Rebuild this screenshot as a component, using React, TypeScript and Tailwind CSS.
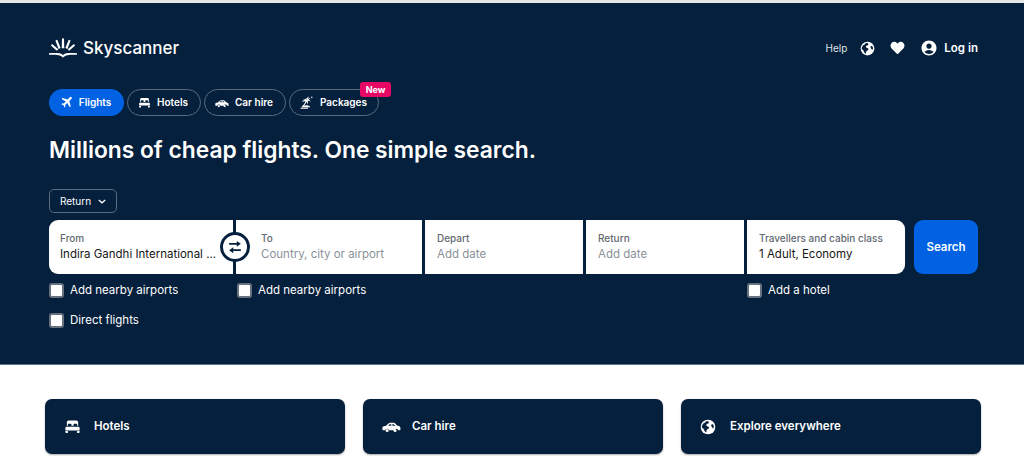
import { FaHeart } from "react-icons/fa";
import { MdAccountCircle } from "react-icons/md";

const FONT = "font-['Inter','Noto_Sans',sans-serif]";

function PlaneIcon({ className }: { className?: string }) {
  return (
    <svg viewBox="0 0 24 24" fill="currentColor" className={className}>
      <path d="M21.6 2.400c-1-1-2.600-.9-3.600.1l-3.700 3.800L4.600 3.600 2.800 5.400l7.900 4.800-3.600 3.700-3-.5-1.600 1.600 4 2.100 2 4 1.600-1.600-.5-3 3.700-3.600 4.800 7.900 1.800-1.800-2.700-9.700 3.800-3.700c1-1 1.100-2.600.1-3.600z" />
    </svg>
  );
}

function BedIcon({ className }: { className?: string }) {
  return (
    <svg viewBox="0 0 24 24" fill="currentColor" className={className}>
      <path d="M6.500 3.500h11A2.500 2.500 0 0 1 20 6v5h-1.500V9.300c0-.7-.6-1.300-1.300-1.300h-2.400c-.7 0-1.300.6-1.300 1.300V11h-3V9.300C10.500 8.600 9.900 8 9.200 8H6.800c-.7 0-1.300.6-1.300 1.300V11H4V6a2.500 2.500 0 0 1 2.500-2.500z" />
      <path d="M3.500 12.500h17c.8 0 1.500.7 1.500 1.500v3.500H2V14c0-.8.700-1.500 1.500-1.500zM2 18.500h3.500V21H3a1 1 0 0 1-1-1v-1.500zM18.500 18.500H22V20a1 1 0 0 1-1 1h-2.500v-2.500z" />
    </svg>
  );
}

function CarIcon({ className }: { className?: string }) {
  return (
    <svg viewBox="0 0 24 24" fill="currentColor" className={className}>
      <path fillRule="evenodd" d="M0.500 13.500c0-1.100.9-1.700 2-1.900l2.600-.5 2.700-2.600c.8-.8 1.800-1.200 2.900-1.200h3.300c1.400 0 2.700.6 3.600 1.700l1.400 1.800 2.300.7c1.200.4 2 1.400 2 2.600v1.700c0 .6-.4 1-1 1h-1.600a2.800 2.800 0 0 0-5.400 0H9.200a2.800 2.800 0 0 0-5.400 0H1.500c-.6 0-1-.4-1-1v-2.300zM7.800 10.900l1.300-1.300c.4-.4.900-.6 1.500-.6h1.100v1.900H7.800zm5.200 0V9h.9c.9 0 1.700.4 2.300 1.100l.7.800H13z" />
      <circle cx="6.500" cy="17.200" r="1.900" />
      <circle cx="16.500" cy="17.200" r="1.900" />
    </svg>
  );
}

function PalmIcon({ className }: { className?: string }) {
  return (
    <svg viewBox="0 0 24 24" fill="currentColor" className={className}>
      <path d="M13 8.500c-1.500-2-4.500-2.700-7-1.500 1.500-.3 3.300.2 4.500 1.200C8.300 7.800 5.800 8.800 5 11c1.500-1 3.600-1.400 5.300-.8-1.200 3-3.200 5.900-6 8.300l1.600.8c2.800-2.500 4.800-5.500 6.200-8.600.8 1.100 1.200 2.800.8 4.400 1.600-1.500 1.900-3.900 1-5.800 1.800-.1 3.700.6 4.800 1.900-.3-2-1.700-3.500-3.600-4 1.100-1 2.700-1.400 4.200-1.100-1.400-1.200-3.400-1-4.800 0 0-1.500.7-2.900 1.800-3.700-2 .4-3.300 2-3.500 3.900-.5-1-1.400-1.800-2.500-2.100.6.600 1 1.500 1.100 2.300z" />
      <path d="M11 16.500c2.800 0 5.500 1 7.500 3H4c1.800-1.900 4.300-3 7-3zM2.500 20.500h12V22h-12z" />
      <circle cx="20.500" cy="3.500" r="1.200" />
    </svg>
  );
}

function GlobeIcon({ className }: { className?: string }) {
  return (
    <svg viewBox="0 0 24 24" className={className}>
      <circle cx="12" cy="12" r="11" fill="#ffffff" />
      <path
        fill="#05203c"
        d="M9 3.500c-.8 1.800-2.400 2.700-4 3.200-1.600 1.900-2.500 4.200-2.300 6.400 1.700.3 2.800 1.500 3.300 3.100.5 1.600 1.600 3.200 3.400 4.200.4-1.700.1-3 .9-4.200.9-1.200 2.700-1.200 3.200-2.700.4-1.200-.7-2-2-2.400-1.500-.5-2.600-1.500-1.800-2.900.8-1.300 2.300-1 3.200-2 .6-.8.4-1.900-.2-2.800-1.300-.3-2.500-.2-3.700.1z"
      />
      <path fill="#05203c" d="M17 8.500c1.200-.8 2.500-.5 3.400.5.500 2 .3 3.800-.4 5.300-1.100-.5-2-1.300-2.500-2.600-.4-1.200-.9-2.400-.5-3.200z" />
    </svg>
  );
}

function SwapIcon({ className }: { className?: string }) {
  return (
    <svg viewBox="0 0 24 24" fill="currentColor" className={className}>
      <path d="M2 6.500h13V3l7 5-7 5V9.500H2z" transform="translate(0 -1.500)" />
      <path d="M22 17.500H9V21l-7-5 7-5v3.500h13z" transform="translate(0 1.500)" />
    </svg>
  );
}

function Logo() {
  return (
    <div className="flex items-center gap-[6px]">
      <svg viewBox="0 0 28 20" fill="#ffffff" className="w-[28px] h-[20px]">
        <path d="M14 19.800c-1-1.500-2.400-2.200-4.500-2.600-3-.5-6-.5-9.500-.4v-1.600c4-.3 8-.4 10.500.1 1.600.3 2.800.9 3.500 1.900.7-1 1.900-1.600 3.500-1.900 2.500-.5 6.500-.4 10.500-.1v1.600c-3.500-.1-6.500-.1-9.500.4-2.100.4-3.500 1.100-4.500 2.600z" />
        <path d="M13 .5h2l.3 9.800h-2.600zM6.400 2.600l1.900-.8 3.300 8.300-2 1zM21.600 2.600l-1.900-.8-3.300 8.300 2 1zM1.900 7.500l1.200-1.600 6.200 5.300-1.500 1.500zM26.100 7.500l-1.200-1.600-6.200 5.300 1.500 1.500z" />
      </svg>
      <span className="text-[17px] font-medium leading-none text-white">Skyscanner</span>
    </div>
  );
}

function Tab({ label, icon, active, width }: { label: string; icon: React.ReactNode; active?: boolean; width: string }) {
  return (
    <div
      className={`${width} relative h-[27px] flex items-center justify-center gap-[6px] pr-[2px] rounded-full text-[10px] font-semibold text-white ${
        active ? "bg-[#0062e3]" : "border border-[#5b6b80]"
      }`}
    >
      {icon}
      {label}
    </div>
  );
}

function Field({
  label,
  value,
  placeholder,
  className,
}: {
  label: string;
  value: string;
  placeholder?: boolean;
  className: string;
}) {
  return (
    <div className={`bg-white flex flex-col justify-center pb-[1px] pr-2 ${className}`}>
      <span className="text-[10px] leading-[16px] font-medium text-[#626971] whitespace-nowrap">{label}</span>
      <span className={`text-[11.500px] leading-[17px] whitespace-nowrap ${placeholder ? "text-[#8a9199]" : "text-[#161616]"}`}>{value}</span>
    </div>
  );
}

function Check({ label, className }: { label: string; className?: string }) {
  return (
    <div className={`flex items-center gap-[6px] ${className ?? ""}`}>
      <span className="w-[15px] h-[15px] rounded-[3px] bg-white border-2 border-[#68727f]" />
      <span className="text-[11.500px] leading-none text-white whitespace-nowrap">{label}</span>
    </div>
  );
}

function Card({ label, icon }: { label: string; icon: React.ReactNode }) {
  return (
    <div className="h-[55px] w-[300px] rounded-[7px] bg-[#05203c] shadow-[0_1px_2px_rgba(0,0,0,0.35)] flex items-center pl-[19px] text-white text-[11.500px] font-semibold">
      <span className="w-[30px] flex items-center">{icon}</span>
      {label}
    </div>
  );
}

export default function App() {
  return (
    <div className={`${FONT} w-[1024px] h-[456px] overflow-hidden bg-white`}>
      <div className="h-[3px] bg-[#e4e5e6]" />
      <section className="h-[362px] bg-[#05203c] border-b border-[#5d7590] pl-[49px] pr-[46px] pt-[33px]">
        <header className="flex items-center justify-between h-[24px]">
          <Logo />
          <div className="flex items-center text-white">
            <span className="text-[10px] text-[#dfe3e8] mr-[13px]">Help</span>
            <GlobeIcon className="w-[15px] h-[15px] mr-[15px]" />
            <FaHeart className="w-[15px] h-[14px] mr-[15px]" />
            <MdAccountCircle className="w-[18px] h-[18px] mr-[6px]" />
            <span className="text-[11.500px] font-semibold pt-[1px]">Log in</span>
          </div>
        </header>

        <nav className="flex gap-[3px] mt-[29px]">
          <Tab label="Flights" active width="w-[75px]" icon={<PlaneIcon className="w-[13px] h-[13px]" />} />
          <Tab label="Hotels" width="w-[74px]" icon={<BedIcon className="w-[13px] h-[13px]" />} />
          <Tab label="Car hire" width="w-[82px]" icon={<CarIcon className="w-[14px] h-[14px]" />} />
          <div className="relative">
            <Tab label="Packages" width="w-[90px]" icon={<PalmIcon className="w-[15px] h-[15px]" />} />
            <span className="absolute -top-[7px] -right-[12px] h-[15px] w-[31px] rounded-[3px] bg-[#e70866] text-white text-[9px] font-bold flex items-center justify-center leading-none">
              New
            </span>
          </div>
        </nav>

        <h1 className="text-[22.800px] leading-[32px] font-semibold text-white mt-[18px]">
          Millions of cheap flights. One simple search.
        </h1>

        <button className="mt-[23px] h-[24px] w-[68px] rounded-[5px] border border-[#5b6b80] flex items-center justify-center gap-[7px] text-white text-[10px] pt-[1px]">
          Return
          <svg viewBox="0 0 10 6" fill="none" stroke="currentColor" strokeWidth="1.600" className="w-[8px] h-[5px]">
            <path d="M1 1l4 3.600L9 1" />
          </svg>
        </button>

        <div className="flex mt-[7px] relative h-[54px]">
          <Field label="From" value="Indira Gandhi International  ..." className="w-[184px] rounded-l-[9px] pl-[11px]" />
          <Field label="To" value="Country, city or airport" placeholder className="w-[186px] ml-[3px] pl-[25px]" />
          <Field label="Depart" value="Add date" placeholder className="w-[158px] ml-[3px] pl-3" />
          <Field label="Return" value="Add date" placeholder className="w-[158px] ml-[3px] pl-3" />
          <Field label="Travellers and cabin class" value="1 Adult, Economy" className="w-[158px] ml-[3px] rounded-r-[9px] pl-3" />
          <div className="w-[64px] ml-[9px] rounded-[9px] bg-[#0062e3] text-white text-[11.500px] font-semibold flex items-center justify-center pt-[1px]">
            Search
          </div>
          <div className="absolute left-[171px] top-[12px] w-[30px] h-[30px] rounded-full bg-white border-[3px] border-[#05203c] flex items-center justify-center text-[#05203c]">
            <SwapIcon className="w-[14px] h-[14px]" />
          </div>
        </div>

        <div className="flex mt-[9px]">
          <Check label="Add nearby airports" className="w-[188px]" />
          <Check label="Add nearby airports" className="w-[510px]" />
          <Check label="Add a hotel" />
        </div>
        <Check label="Direct flights" className="mt-[15px]" />
      </section>

      <div className="flex gap-[18px] pl-[45px] pt-[34px]">
        <Card label="Hotels" icon={<BedIcon className="w-[17px] h-[17px]" />} />
        <Card label="Car hire" icon={<CarIcon className="w-[19px] h-[19px]" />} />
        <Card label="Explore everywhere" icon={<GlobeIcon className="w-[16px] h-[16px]" />} />
      </div>
    </div>
  );
}
